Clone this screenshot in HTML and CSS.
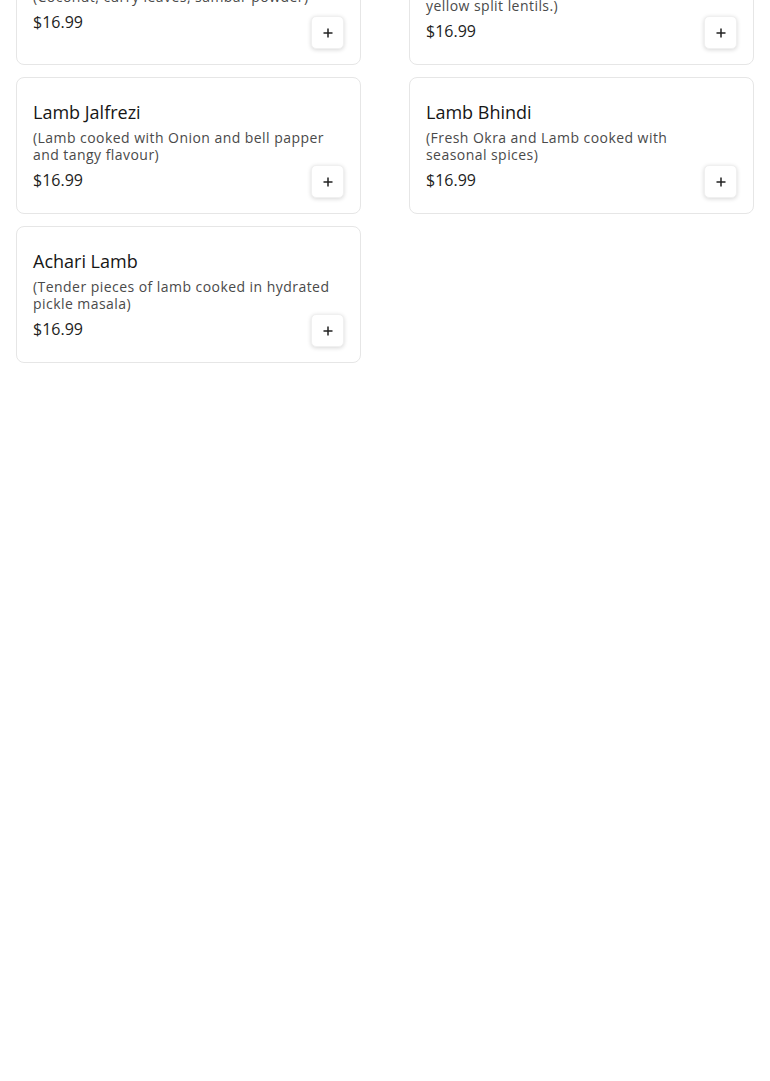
FILE: index.html
```html
<!DOCTYPE html>
<html lang="en">
<head>
    <meta charset="UTF-8">
    <meta name="viewport" content="width=device-width, initial-scale=1.0">
    <title>Lamb Dishes</title>
    <link rel="stylesheet" href="styles.css">
</head>
<body>
    <div class="menu">
        <div class="menu-grid">
            <div class="dish">
                <h3 class="dish-name dish-name--tag">Lamb Chettinad</h3>
                <p class="dish-desc">(Coconut, curry leaves, sambar powder)</p>
                <span class="dish-price">$16.99</span>
                <button class="add-btn" aria-label="Add">
                    <svg width="12" height="12" viewBox="0 0 12 12"><path d="M6 1.5v9M1.5 6h9" stroke="#222" stroke-width="1.5"/></svg>
                </button>
            </div>
            <div class="dish">
                <h3 class="dish-name">Dal Gosht</h3>
                <p class="dish-desc">(Tender lamb cooked with chana dal and yellow split lentils.)</p>
                <span class="dish-price">$16.99</span>
                <button class="add-btn" aria-label="Add">
                    <svg width="12" height="12" viewBox="0 0 12 12"><path d="M6 1.5v9M1.5 6h9" stroke="#222" stroke-width="1.5"/></svg>
                </button>
            </div>
            <div class="dish">
                <h3 class="dish-name">Lamb Jalfrezi</h3>
                <p class="dish-desc">(Lamb cooked with Onion and bell papper and tangy flavour)</p>
                <span class="dish-price">$16.99</span>
                <button class="add-btn" aria-label="Add">
                    <svg width="12" height="12" viewBox="0 0 12 12"><path d="M6 1.5v9M1.5 6h9" stroke="#222" stroke-width="1.5"/></svg>
                </button>
            </div>
            <div class="dish">
                <h3 class="dish-name">Lamb Bhindi</h3>
                <p class="dish-desc">(Fresh Okra and Lamb cooked with seasonal spices)</p>
                <span class="dish-price">$16.99</span>
                <button class="add-btn" aria-label="Add">
                    <svg width="12" height="12" viewBox="0 0 12 12"><path d="M6 1.5v9M1.5 6h9" stroke="#222" stroke-width="1.5"/></svg>
                </button>
            </div>
            <div class="dish">
                <h3 class="dish-name">Achari Lamb</h3>
                <p class="dish-desc">(Tender pieces of lamb cooked in hydrated pickle masala)</p>
                <span class="dish-price">$16.99</span>
                <button class="add-btn" aria-label="Add">
                    <svg width="12" height="12" viewBox="0 0 12 12"><path d="M6 1.5v9M1.5 6h9" stroke="#222" stroke-width="1.5"/></svg>
                </button>
            </div>
        </div>
    </div>
</body>
</html>
```

FILE: styles.css
```css
body {
    margin: 0;
    padding: 0;
    background: #fff;
    font-family: "Open Sans", Arial, sans-serif;
    color: #1c1c1c;
}

.menu {
    padding: 0 16px;
}

/* the list is scrolled, first row sits partly above the top */
.menu-grid {
    margin-top: -72px;
    display: grid;
    grid-template-columns: 1fr 1fr;
    column-gap: 48px;
    row-gap: 12px;
}

.dish {
    display: grid;
    grid-template-columns: 1fr auto;
    grid-template-rows: auto auto 1fr;
    border: 1px solid #e6e6e6;
    border-radius: 8px;
    padding: 22px 16px 15px;
    min-height: 135px;
    box-sizing: border-box;
}

.dish-name {
    grid-column: 1 / 3;
    margin: 0;
    font-size: 18px;
    line-height: 24px;
    font-weight: 500;
    color: #161616;
}

.dish-name--tag {
    padding-bottom: 8px;
}

.dish-desc {
    grid-column: 1 / 3;
    margin: 5px 0 2px;
    padding-right: 11px;
    font-size: 14px;
    line-height: 17px;
    letter-spacing: 0.45px;
    color: #4a4a4a;
}

.dish-price {
    align-self: start;
    font-size: 16px;
    line-height: 30px;
    color: #222;
}

.add-btn {
    align-self: end;
    width: 33px;
    height: 33px;
    padding: 0;
    display: flex;
    align-items: center;
    justify-content: center;
    background: #fff;
    border: 1px solid #f0f0f0;
    border-radius: 5px;
    box-shadow: 0 1px 4px rgba(0, 0, 0, 0.16);
    cursor: pointer;
}
```
